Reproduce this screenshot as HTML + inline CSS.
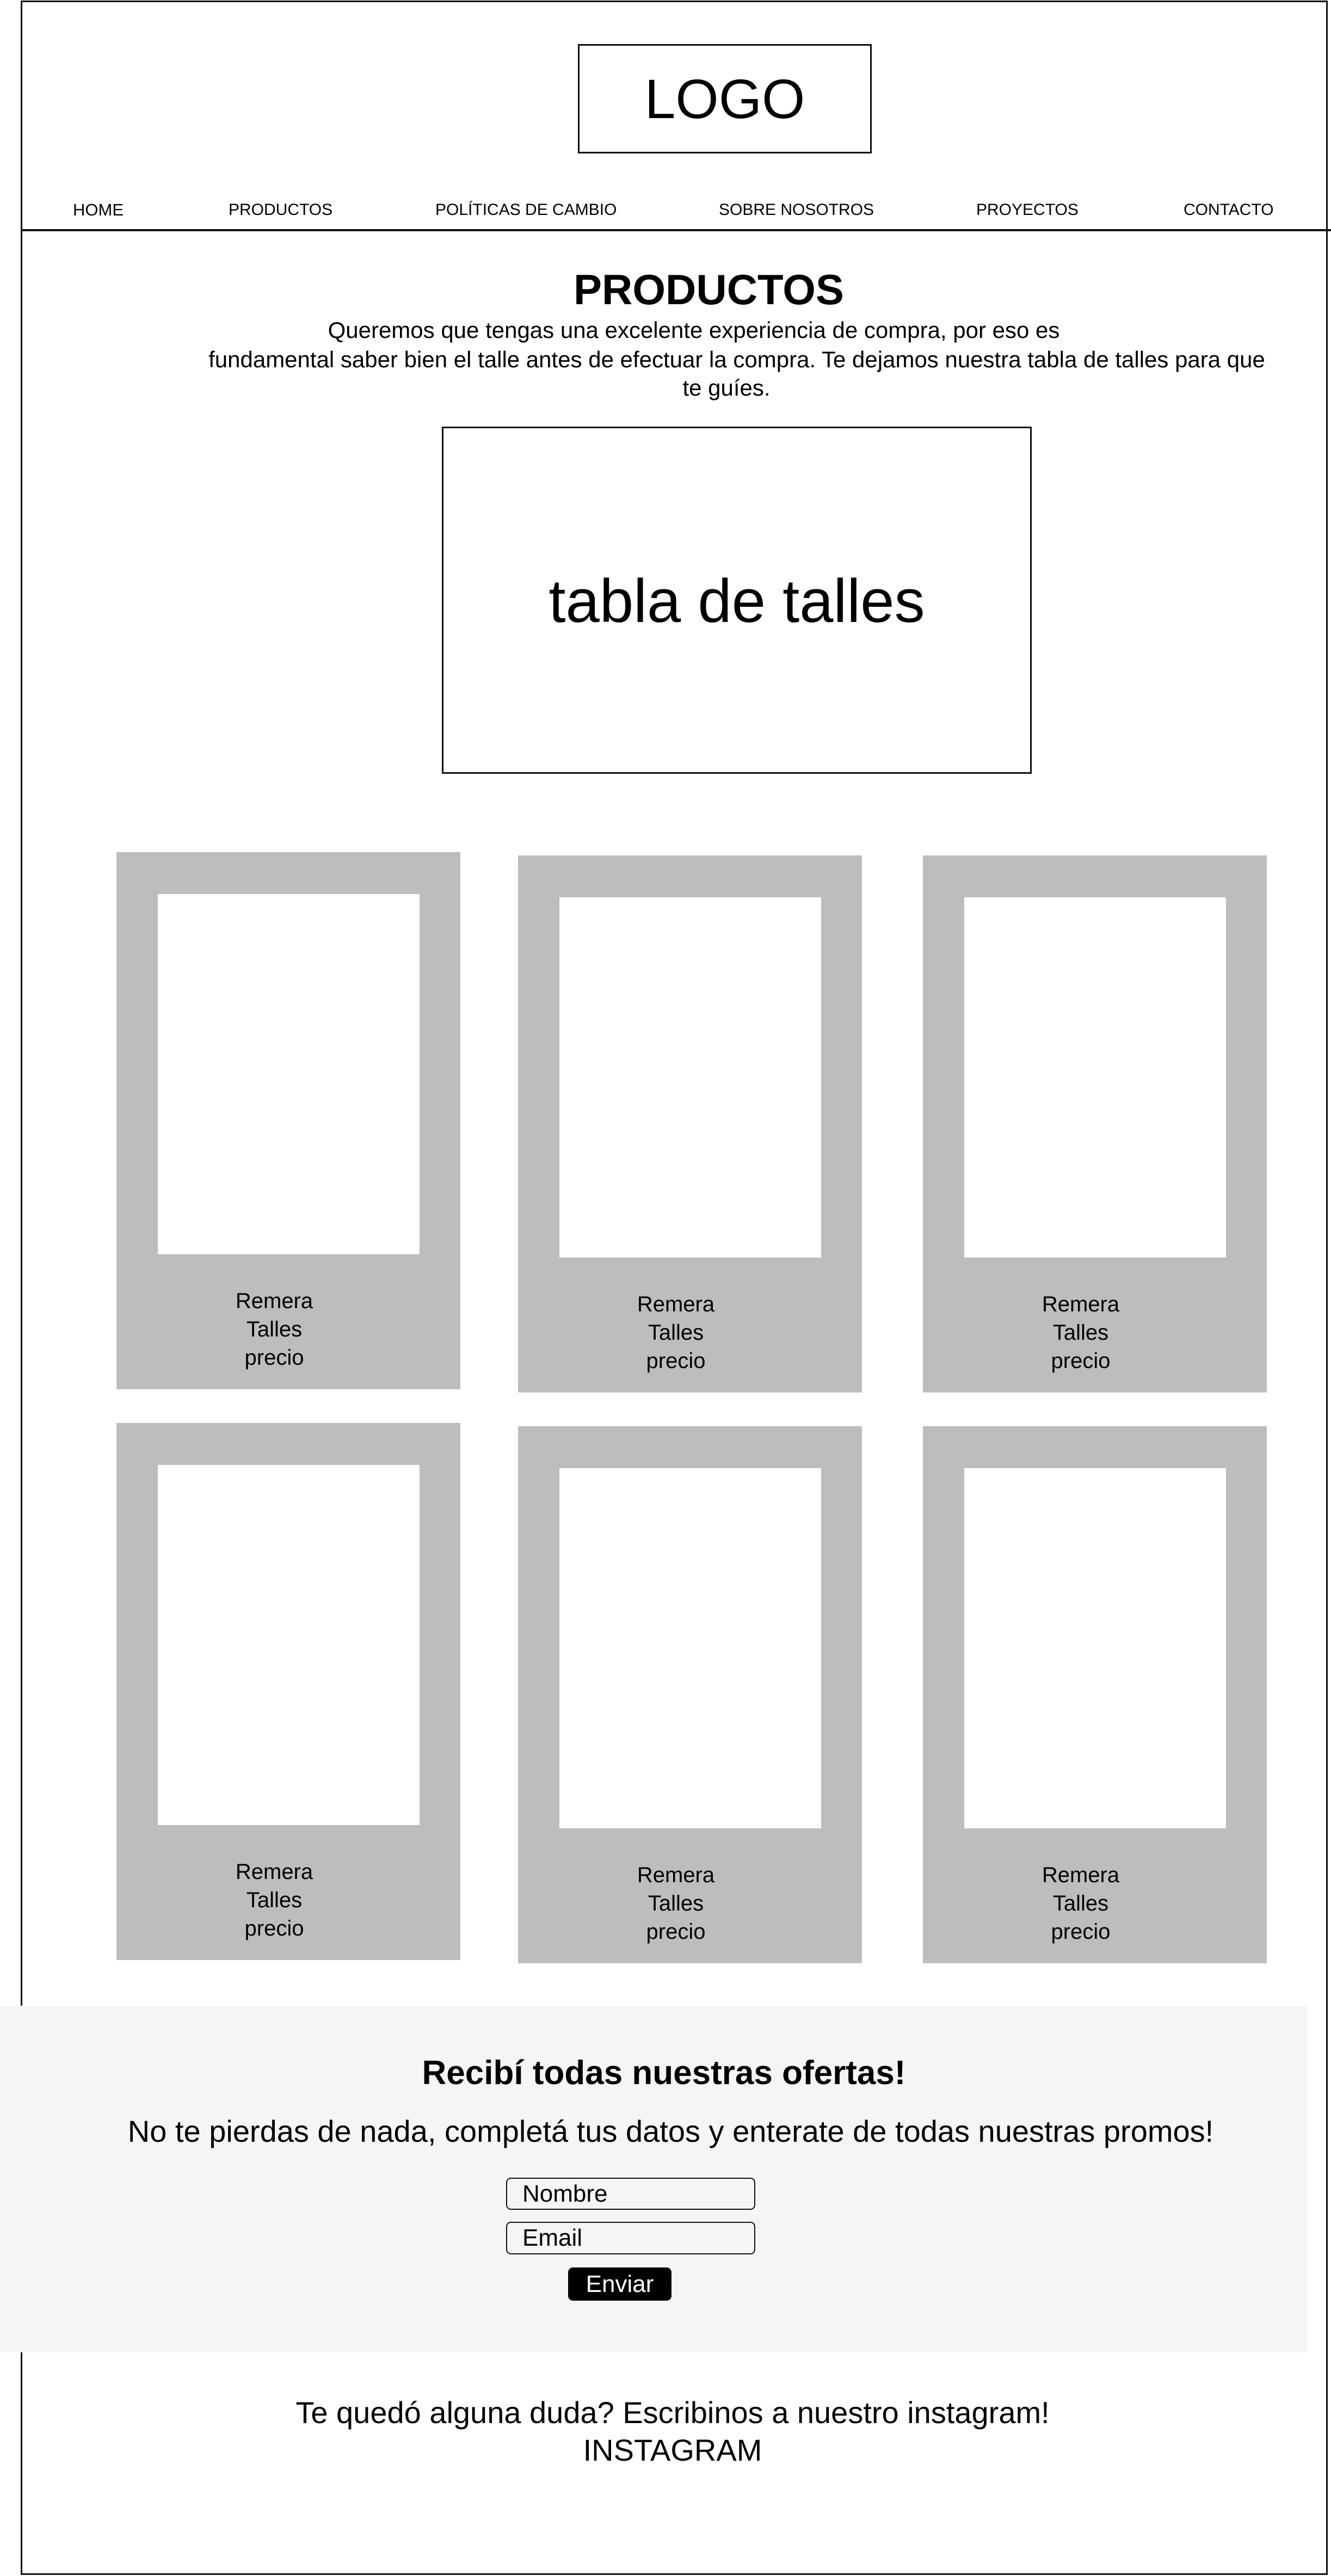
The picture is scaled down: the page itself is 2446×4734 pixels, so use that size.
<!DOCTYPE html>
<html><head><meta charset="utf-8"><style>
*{margin:0;padding:0;box-sizing:border-box}
body{width:2446px;height:4734px;position:relative;background:#fff;font-family:"Liberation Sans",sans-serif;color:#000;overflow:hidden}
.a{position:absolute}
.c{text-align:center;white-space:nowrap}
.card{position:absolute;background:#bdbdbd;width:632px;height:987px}
.card .img{position:absolute;left:76px;top:77px;width:481px;height:662px;background:#fff}
.card .t{position:absolute;left:0;width:580px;text-align:center;font-size:40px;line-height:52px}
</style></head><body>
<div class="a" style="left:38px;top:1px;width:2402px;height:4731px;border:3px solid #111"></div>
<div class="a" style="left:1062px;top:81px;width:540px;height:201px;border:3px solid #111"></div>
<div class="a c" style="left:1062px;top:122px;width:540px;font-size:102px;line-height:120px">LOGO</div>
<div class="a" style="left:40px;top:421px;width:2406px;height:4px;background:#111"></div>
<div class="a" style="top:368px;font-size:31px;line-height:36px;left:134px">HOME</div>
<div class="a" style="top:368px;font-size:30px;line-height:36px;left:420px">PRODUCTOS</div>
<div class="a" style="top:368px;font-size:30px;line-height:36px;left:800px">POLÍTICAS DE CAMBIO</div>
<div class="a" style="top:368px;font-size:30px;line-height:36px;left:1321px">SOBRE NOSOTROS</div>
<div class="a" style="top:368px;font-size:30px;line-height:36px;left:1794px">PROYECTOS</div>
<div class="a" style="top:368px;font-size:30px;line-height:36px;left:2175px">CONTACTO</div>
<div class="a c" style="left:800px;width:1005px;top:484px;font-size:78px;font-weight:bold;line-height:96px">PRODUCTOS</div>
<div class="a c" style="left:575px;width:1400px;top:581px;font-size:42px;line-height:52px">Queremos que tengas una excelente experiencia de compra, por eso es</div>
<div class="a c" style="left:300px;width:2108px;top:635px;font-size:42px;line-height:52px">fundamental saber bien el talle antes de efectuar la compra. Te dejamos nuestra tabla de talles para que</div>
<div class="a c" style="left:1235px;width:200px;top:687px;font-size:42px;line-height:52px">te guíes.</div>
<div class="a" style="left:812px;top:784px;width:1084px;height:638px;border:3px solid #111"></div>
<div class="a c" style="left:812px;top:1040px;width:1084px;font-size:112px;line-height:130px">tabla de talles</div>

<div class="card" style="left:214px;top:1566px"><div class="img"></div><div class="t" style="top:799px">Remera</div><div class="t" style="top:851px">Talles</div><div class="t" style="top:903px">precio</div></div>
<div class="card" style="left:952px;top:1572px"><div class="img"></div><div class="t" style="top:799px">Remera</div><div class="t" style="top:851px">Talles</div><div class="t" style="top:903px">precio</div></div>
<div class="card" style="left:1696px;top:1572px"><div class="img"></div><div class="t" style="top:799px">Remera</div><div class="t" style="top:851px">Talles</div><div class="t" style="top:903px">precio</div></div>
<div class="card" style="left:214px;top:2615px"><div class="img"></div><div class="t" style="top:799px">Remera</div><div class="t" style="top:851px">Talles</div><div class="t" style="top:903px">precio</div></div>
<div class="card" style="left:952px;top:2621px"><div class="img"></div><div class="t" style="top:799px">Remera</div><div class="t" style="top:851px">Talles</div><div class="t" style="top:903px">precio</div></div>
<div class="card" style="left:1696px;top:2621px"><div class="img"></div><div class="t" style="top:799px">Remera</div><div class="t" style="top:851px">Talles</div><div class="t" style="top:903px">precio</div></div>

<div class="a" style="left:0;top:3686px;width:2402px;height:637px;background:#f5f5f5"></div>
<div class="a c" style="left:668px;width:1104px;top:3773px;font-size:62px;font-weight:bold;line-height:74px">Recibí todas nuestras ofertas!</div>
<div class="a c" style="left:134px;width:2197px;top:3884px;font-size:56px;line-height:66px">No te pierdas de nada, completá tus datos y enterate de todas nuestras promos!</div>
<div class="a" style="left:930px;top:4002px;width:458px;height:59px;border:2px solid #111;border-radius:9px;font-size:44px;line-height:55px;padding-left:28px">Nombre</div>
<div class="a" style="left:930px;top:4083px;width:458px;height:60px;border:2px solid #111;border-radius:9px;font-size:44px;line-height:56px;padding-left:28px">Email</div>
<div class="a c" style="left:1044px;top:4167px;width:190px;height:61px;background:#000;border-radius:9px;color:#fff;font-size:44px;line-height:61px">Enviar</div>
<div class="a c" style="left:438px;width:1596px;top:4401px;font-size:56px;line-height:66px">Te quedó alguna duda? Escribinos a nuestro instagram!</div>
<div class="a c" style="left:1036px;width:400px;top:4470px;font-size:56px;line-height:66px">INSTAGRAM</div>
</body></html>
